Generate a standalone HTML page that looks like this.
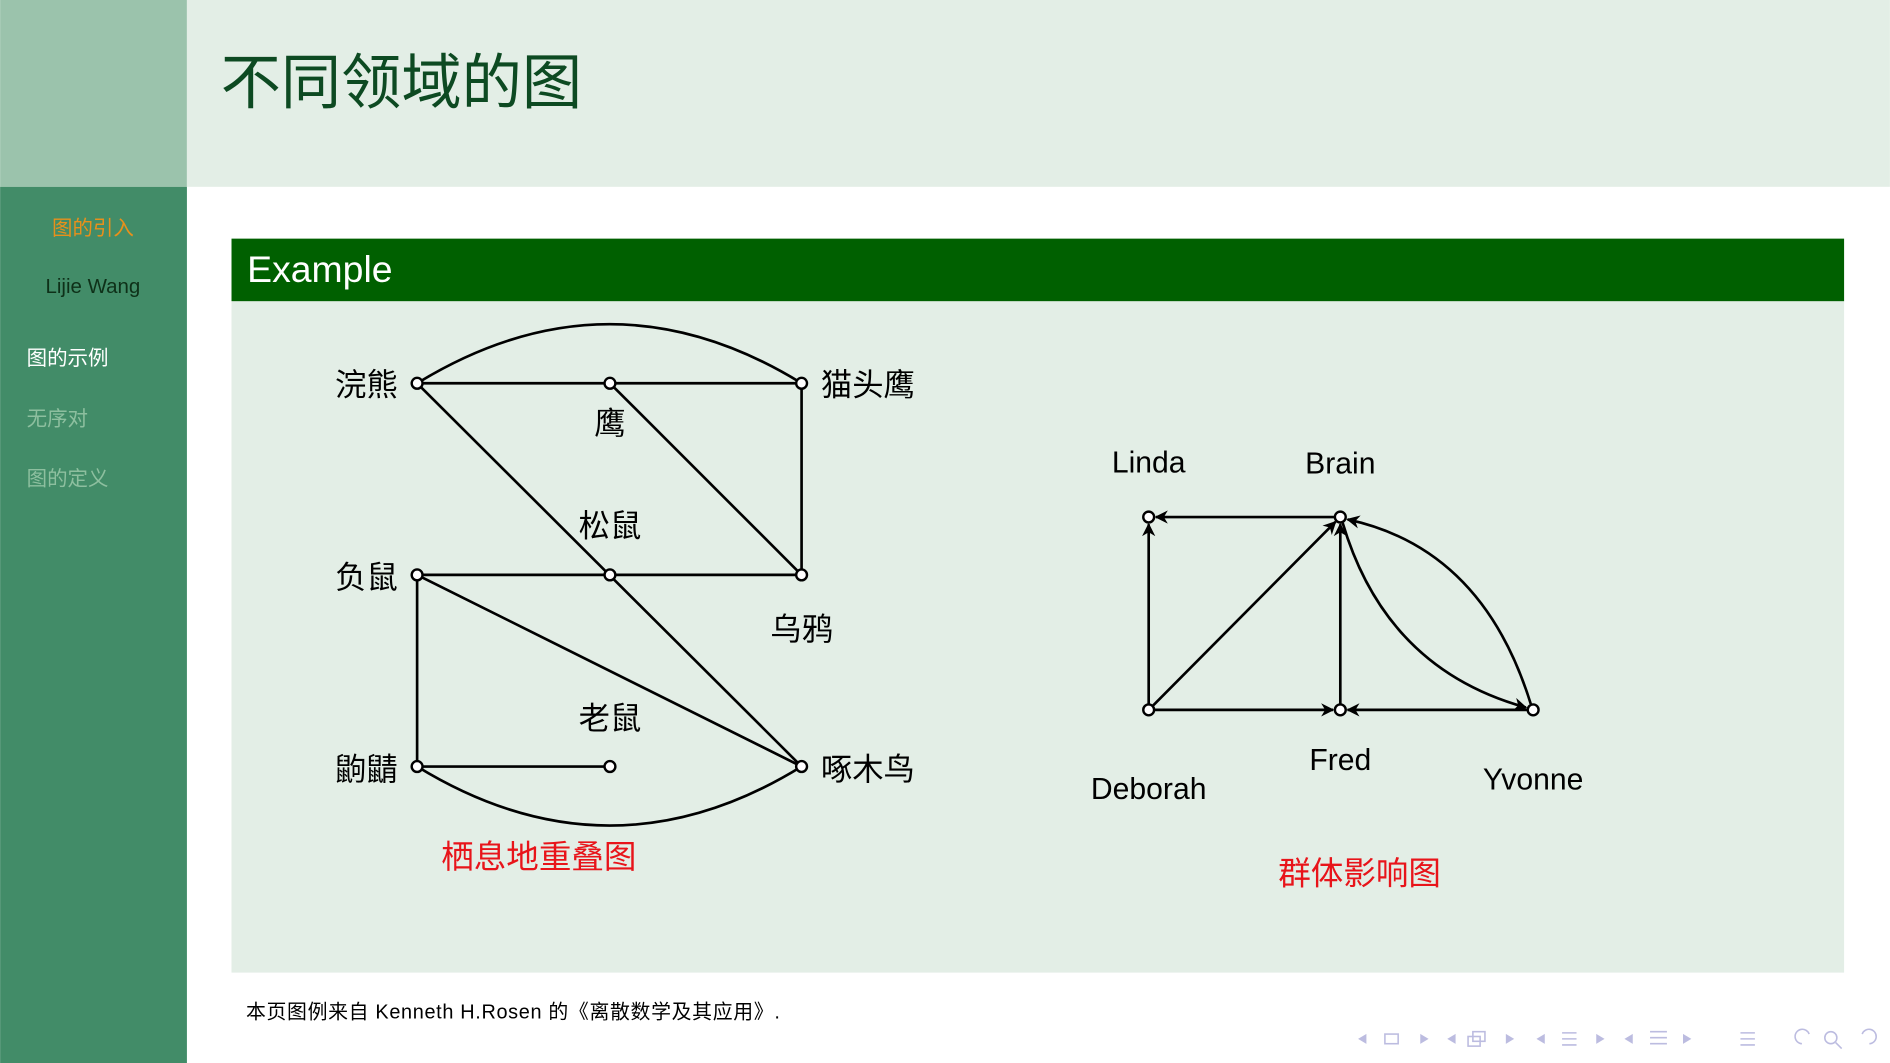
<!DOCTYPE html>
<html><head><meta charset="utf-8"><style>
html,body{margin:0;padding:0;width:1890px;height:1063px;overflow:hidden;background:#fff}
svg{display:block}
text{font-family:"Liberation Sans","Noto Sans CJK SC",sans-serif}
</style></head><body>
<svg width="1890" height="1063" viewBox="0 0 1568 882" xmlns="http://www.w3.org/2000/svg">
<defs>
<marker id="ar" viewBox="0 0 10 10" refX="9" refY="5" markerWidth="11" markerHeight="11" orient="auto-start-reverse" markerUnits="userSpaceOnUse"><path d="M0,0 L10,5 L0,10 L3,5 z" fill="#000"/></marker>
</defs>
<rect x="0" y="0" width="155" height="155" fill="#9bc3ac"/>
<rect x="0" y="155" width="155" height="727" fill="#428c68"/>
<rect x="155" y="0" width="1413" height="155" fill="#e3eee6"/>
<text x="183" y="86" font-size="50" fill="#0d4a22">不同领域的图</text>
<text x="77" y="195" font-size="17" fill="#e8901b" text-anchor="middle">图的引入</text>
<text x="77" y="243" font-size="17" fill="#0e3018" text-anchor="middle">Lijie Wang</text>
<text x="22" y="303" font-size="17" fill="#fff">图的示例</text>
<text x="22" y="353" font-size="17" fill="#8dbf9f">无序对</text>
<text x="22" y="403" font-size="17" fill="#8dbf9f">图的定义</text>
<rect x="192" y="198" width="1338" height="52" fill="#006000"/>
<text x="205" y="234" font-size="31" fill="#fff">Example</text>
<rect x="192" y="250" width="1338" height="557" fill="#e3eee6"/>
<g stroke="#000" stroke-width="2.2" fill="none">
<line x1="346" y1="318" x2="665" y2="318"/>
<path d="M346,318 Q506,220 665,318"/>
<line x1="346" y1="318" x2="665" y2="636"/>
<line x1="506" y1="318" x2="665" y2="477"/>
<line x1="665" y1="318" x2="665" y2="477"/>
<line x1="346" y1="477" x2="665" y2="477"/>
<line x1="346" y1="477" x2="665" y2="636"/>
<line x1="346" y1="477" x2="346" y2="636"/>
<line x1="346" y1="636" x2="506" y2="636"/>
<path d="M346,636 Q506,734 665,636"/>
</g>
<g stroke="#000" stroke-width="2" fill="#fff">
<circle cx="346" cy="318" r="4.5"/><circle cx="506" cy="318" r="4.5"/><circle cx="665" cy="318" r="4.5"/>
<circle cx="346" cy="477" r="4.5"/><circle cx="506" cy="477" r="4.5"/><circle cx="665" cy="477" r="4.5"/>
<circle cx="346" cy="636" r="4.5"/><circle cx="506" cy="636" r="4.5"/><circle cx="665" cy="636" r="4.5"/>
</g>
<g font-size="26" fill="#000" text-anchor="middle">
<text x="304" y="328">浣熊</text><text x="720" y="328">猫头鹰</text><text x="506" y="360">鹰</text>
<text x="506" y="445">松鼠</text><text x="304" y="488">负鼠</text><text x="665" y="531">乌鸦</text>
<text x="506" y="605">老鼠</text><text x="304" y="647">鼩鼱</text><text x="720" y="647">啄木鸟</text>
</g>
<text x="447" y="720" font-size="27" fill="#e8141a" text-anchor="middle">栖息地重叠图</text>
<g stroke="#000" stroke-width="2.2" fill="none">
<line x1="1107" y1="429" x2="959" y2="429" marker-end="url(#ar)"/>
<line x1="953" y1="584" x2="953" y2="435" marker-end="url(#ar)"/>
<line x1="956" y1="586" x2="1108" y2="433" marker-end="url(#ar)"/>
<line x1="1112" y1="584" x2="1112" y2="435" marker-end="url(#ar)"/>
<line x1="958" y1="589" x2="1106" y2="589" marker-end="url(#ar)"/>
<line x1="1267" y1="589" x2="1118" y2="589" marker-end="url(#ar)"/>
<path d="M1114,434 Q1150,555 1266,587" marker-end="url(#ar)"/>
<path d="M1270,584 Q1230,455 1118,431" marker-end="url(#ar)"/>
</g>
<g stroke="#000" stroke-width="2" fill="#fff">
<circle cx="953" cy="429" r="4.5"/><circle cx="1112" cy="429" r="4.5"/>
<circle cx="953" cy="589" r="4.5"/><circle cx="1112" cy="589" r="4.5"/><circle cx="1272" cy="589" r="4.5"/>
</g>
<g font-size="25" fill="#000" text-anchor="middle">
<text x="953" y="392">Linda</text><text x="1112" y="393">Brain</text>
<text x="953" y="663">Deborah</text><text x="1112" y="639">Fred</text><text x="1272" y="655">Yvonne</text>
</g>
<text x="1128" y="734" font-size="27" fill="#e8141a" text-anchor="middle">群体影响图</text>
<text x="204" y="845" font-size="16.5" fill="#000" textLength="443">本页图例来自 Kenneth H.Rosen 的《离散数学及其应用》.</text>
<g fill="#bcbce0" stroke="#bcbce0" stroke-width="1.3">
<path d="M1133,859 l-5,3 l5,3z"/><rect x="1149" y="858" width="11" height="8" fill="none"/><path d="M1179,859 l5,3 l-5,3z"/>
<path d="M1207,859 l-5,3 l5,3z"/><rect x="1218" y="860" width="10" height="8" fill="none"/><rect x="1222" y="856" width="10" height="8" fill="none"/><path d="M1250,859 l5,3 l-5,3z"/>
<path d="M1281,859 l-5,3 l5,3z"/><path d="M1296,857h12M1296,862h12M1296,867h12" fill="none"/><path d="M1325,859 l5,3 l-5,3z"/>
<path d="M1354,859 l-5,3 l5,3z"/><path d="M1369,856h14M1369,861h14M1369,866h14" fill="none"/><path d="M1397,859 l5,3 l-5,3z"/>
<path d="M1444,857h12M1444,862h12M1444,867h12" fill="none"/>
<path d="M1495,866 a6,6 0 1 1 6,-8" fill="none"/><circle cx="1519" cy="861" r="5" fill="none"/><path d="M1523,865l5,5" fill="none"/><path d="M1551,866 a6,6 0 1 0 -6,-8" fill="none"/>
</g>
</svg>
</body></html>
